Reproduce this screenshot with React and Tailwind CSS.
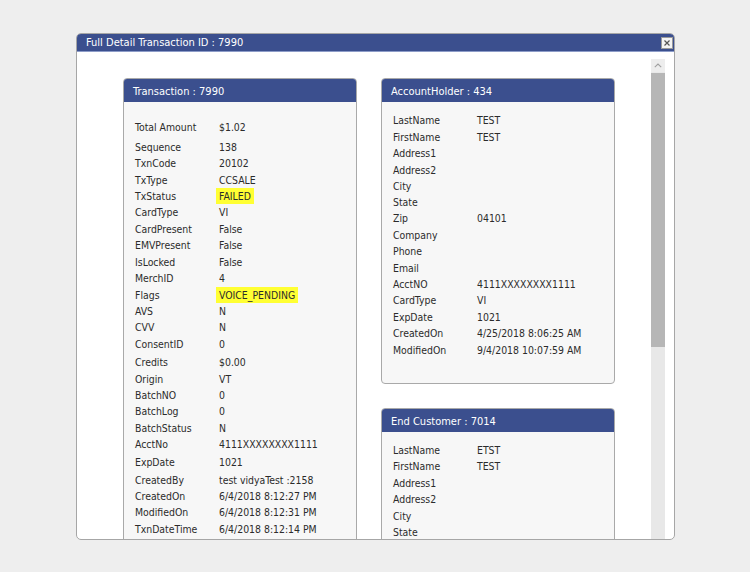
const font = "font-['DejaVu_Sans_Condensed','DejaVu_Sans',sans-serif] font-stretch-condensed";

const txnRows = [
    ['Total Amount', '$1.02', 0],
    ['Sequence', '138', 'mt-[4px]'],
    ['TxnCode', '20102', 'mt-0'],
    ['TxType', 'CCSALE', 'mt-[1px]'],
    ['TxStatus', 'FAILED', 'mt-0', true],
    ['CardType', 'VI', 'mt-0'],
    ['CardPresent', 'False', 'mt-[1px]'],
    ['EMVPresent', 'False', 'mt-0'],
    ['IsLocked', 'False', 'mt-[1px]'],
    ['MerchID', '4', 'mt-0'],
    ['Flags', 'VOICE_PENDING', 'mt-[1px]', true],
    ['AVS', 'N', 'mt-0'],
    ['CVV', 'N', 'mt-0'],
    ['ConsentID', '0', 'mt-[1px]'],
    ['Credits', '$0.00', 'mt-[2px]'],
    ['Origin', 'VT', 'mt-[1px]'],
    ['BatchNO', '0', 'mt-0'],
    ['BatchLog', '0', 'mt-0'],
    ['BatchStatus', 'N', 'mt-[1px]'],
    ['AcctNo', '4111XXXXXXXX1111', 'mt-0'],
    ['ExpDate', '1021', 'mt-[2px]'],
    ['CreatedBy', 'test vidyaTest :2158', 'mt-[2px]'],
    ['CreatedOn', '6/4/2018 8:12:27 PM', 'mt-0'],
    ['ModifiedOn', '6/4/2018 8:12:31 PM', 'mt-0'],
    ['TxnDateTime', '6/4/2018 8:12:14 PM', 'mt-[1px]'],
];

const holderRows = [
    ['LastName', 'TEST', 0],
    ['FirstName', 'TEST', 'mt-[1px]'],
    ['Address1', '', 'mt-0'],
    ['Address2', '', 'mt-[1px]'],
    ['City', '', 'mt-0'],
    ['State', '', 'mt-0'],
    ['Zip', '04101', 'mt-0'],
    ['Company', '', 'mt-[1px]'],
    ['Phone', '', 'mt-0'],
    ['Email', '', 'mt-[1px]'],
    ['AcctNO', '4111XXXXXXXX1111', 'mt-0'],
    ['CardType', 'VI', 'mt-0'],
    ['ExpDate', '1021', 'mt-[1px]'],
    ['CreatedOn', '4/25/2018 8:06:25 AM', 'mt-0'],
    ['ModifiedOn', '9/4/2018 10:07:59 AM', 'mt-[1px]'],
];

const customerRows = [
    ['LastName', 'ETST', 0],
    ['FirstName', 'TEST', 'mt-0'],
    ['Address1', '', 'mt-[1px]'],
    ['Address2', '', 'mt-0'],
    ['City', '', 'mt-[1px]'],
    ['State', '', 'mt-0'],
];

const Row = ({ label, value, mt, mark }) => (
    <div className={`flex h-4 leading-4 ${mt || ''}`}>
        <span className="w-[84px] shrink-0">{label}</span>
        {mark ? (
            <span className="bg-[#ffff33] px-[3px] -ml-[3px]">{value}</span>
        ) : (
            <span>{value}</span>
        )}
    </div>
);

const Card = ({ title, rows, bodyClass }) => (
    <div className="w-[234px] rounded-[4px] border border-[#a9a9a9] bg-[#f7f7f7] overflow-hidden shrink-0">
        <div className="h-[23px] bg-[#3b4f8e] text-white text-[11px] leading-[25px] pl-[9px]">{title}</div>
        <div className={`pl-[11px] ${bodyClass}`}>
            {rows.map(([label, value, mt, mark], i) => (
                <Row key={i} label={label} value={value} mt={mt} mark={mark} />
            ))}
        </div>
    </div>
);

export default function App() {
    return (
        <div className={`w-[750px] h-[572px] bg-[#eeeeee] pt-[33px] pl-[76px] overflow-hidden ${font} text-[10.4px] text-[#2b2b2b]`}>
            <div className="w-[599px] h-[507px] rounded-[5px] border border-[#a6a6a6] bg-white overflow-hidden flex flex-col">
                {/* Title bar */}
                <div className="h-[18px] bg-[#3b4f8e] border-b border-[#8d9cc8] flex items-center justify-between pl-[9px] pr-[1px] shrink-0">
                    <span className="text-white text-[11px] leading-none">Full Detail Transaction ID : 7990</span>
                    <div className="w-[12px] h-[12px] bg-[#f4f4f4] border border-[#9a9a9a] flex items-center justify-center">
                        <svg width="8" height="8" viewBox="0 0 8 8">
                            <path d="M1.5 1.5 L6.5 6.5 M6.5 1.5 L1.5 6.5" stroke="#555" strokeWidth="1.2" />
                        </svg>
                    </div>
                </div>

                {/* Body */}
                <div className="flex flex-1 min-h-0">
                    <div className="flex-1 overflow-hidden pt-[26px] pl-[46px] flex gap-[24px] items-start">
                        <Card title="Transaction : 7990" rows={txnRows} bodyClass="pt-[17px] pb-4" />
                        <div className="flex flex-col gap-[24px]">
                            <Card title="AccountHolder : 434" rows={holderRows} bodyClass="pt-[10px] pb-[25px]" />
                            <Card title="End Customer : 7014" rows={customerRows} bodyClass="pt-[10px] pb-4" />
                        </div>
                    </div>

                    {/* Scrollbar */}
                    <div className="w-[14px] mt-[7px] mr-[9px] bg-[#e8e8e8] flex flex-col shrink-0">
                        <div className="h-[13px] flex items-center justify-center bg-[#ededed]">
                            <svg width="8" height="5" viewBox="0 0 8 5">
                                <path d="M0.8 4.2 L4 1 L7.2 4.2" stroke="#a0a0a0" strokeWidth="1.1" fill="none" />
                            </svg>
                        </div>
                        <div className="h-[274px] bg-[#b6b6b6] mt-[1px]" />
                    </div>
                </div>
            </div>
        </div>
    );
}
